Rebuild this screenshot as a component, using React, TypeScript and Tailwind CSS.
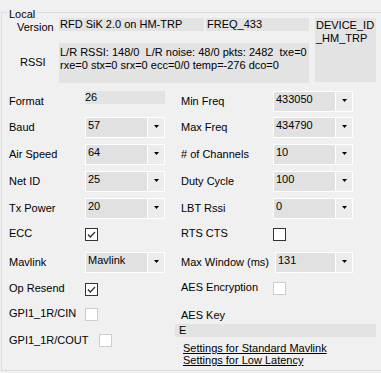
import React from "react";

function Arrow() {
  return (
    <svg width="5" height="3" viewBox="0 0 5 3" className="block">
      <polygon points="0,0 5,0 2.5,3" fill="#000" />
    </svg>
  );
}

function Combo({ value, w = 80 }: { value: string; w?: number }) {
  return (
    <div
      className="h-[21px] border border-white bg-[#e1e1e1] flex shrink-0"
      style={{ width: w }}
    >
      <div className="flex-1 pl-[2px] pt-px whitespace-nowrap">{value}</div>
      <div className="w-[17px] border-l border-white bg-[#ececec] flex items-start justify-center pt-[7px] pl-px">
        <Arrow />
      </div>
    </div>
  );
}

function Check({ checked = false, disabled = false }: { checked?: boolean; disabled?: boolean }) {
  return (
    <div
      className={
        "w-[13px] h-[13px] shrink-0 bg-white border " +
        (disabled ? "border-[#cccccc]" : "border-[#333333]")
      }
    >
      {checked && (
        <svg width="11" height="11" viewBox="0 0 11 11" className="block">
          <polyline points="2,5.5 4.3,8 9,3" fill="none" stroke="#333" strokeWidth="1.3" />
        </svg>
      )}
    </div>
  );
}

function LRow({ label, value }: { label: string; value: string }) {
  return (
    <div className="h-[27px] flex items-start">
      <div className="w-[76px] pt-[4px]">{label}</div>
      <Combo value={value} />
    </div>
  );
}

function RRow({ label, value }: { label: string; value: string }) {
  return (
    <div className="h-[27px] flex items-start">
      <div className="w-[98px] pl-[6px] pt-[4px] whitespace-nowrap">{label}</div>
      <Combo value={value} />
    </div>
  );
}

export default function App() {
  return (
    <div className="w-[381px] h-[373px] bg-[#f0f0f0] overflow-hidden text-[11px] leading-[13px] text-black font-['Liberation_Sans',Arial,sans-serif]">
      <div className="relative mt-[12px] ml-[1px] w-[390px] h-[359px] border-l border-t border-b border-[#dcdcdc]">
        <div className="absolute left-[5px] top-[-5px] px-[2px] bg-[#f0f0f0]">Local</div>

        {/* top info */}
        <div className="flex mt-[5px]">
          <div className="w-[57px] flex flex-col">
            <div className="pl-[15px] pt-[3px]">Version</div>
            <div className="pl-[18px] mt-[22px]">RSSI</div>
          </div>
          <div className="w-[250px] flex flex-col">
            <div className="flex gap-[2px]">
              <div className="w-[145px] h-[13px] bg-[#e3e3e3] pl-px whitespace-nowrap">RFD SiK 2.0 on HM-TRP</div>
              <div className="w-[103px] h-[13px] bg-[#e3e3e3] pl-px whitespace-nowrap">FREQ_433</div>
            </div>
            <div className="mt-[12px] h-[40px] bg-[#e3e3e3] pl-px pt-[3px] whitespace-pre overflow-hidden">
              {"L/R RSSI: 148/0  L/R noise: 48/0 pkts: 2482  txe=0\nrxe=0 stx=0 srx=0 ecc=0/0 temp=-276 dco=0"}
            </div>
          </div>
          <div className="ml-[6px] w-[61px] h-[64px] bg-[#e3e3e3] pt-px pl-px">
            DEVICE_ID
            <br />
            _HM_TRP
          </div>
        </div>

        {/* settings */}
        <div className="flex mt-[8px]">
          {/* left column */}
          <div className="w-[166px] ml-[7px] flex flex-col">
            <div className="h-[26px] flex items-start">
              <div className="w-[76px] pt-[4px]">Format</div>
              <div className="w-[80px] h-[13px] bg-[#e3e3e3]">26</div>
            </div>
            <LRow label="Baud" value="57" />
            <LRow label="Air Speed" value="64" />
            <LRow label="Net ID" value="25" />
            <LRow label="Tx Power" value="20" />
            <div className="h-[27px] flex items-start">
              <div className="w-[76px] pt-[2px]">ECC</div>
              <div className="mt-[3px]"><Check checked /></div>
            </div>
            <div className="h-[29px] flex items-start">
              <div className="w-[76px] pt-[4px]">Mavlink</div>
              <Combo value="Mavlink" />
            </div>
            <div className="h-[26px] flex items-start">
              <div className="w-[76px] pt-[1px]">Op Resend</div>
              <div className="mt-[2px]"><Check checked /></div>
            </div>
            <div className="h-[26px] flex items-start">
              <div className="w-[76px]">GPI1_1R/CIN</div>
              <div className="mt-[1px]"><Check disabled /></div>
            </div>
            <div className="flex items-start">
              <div className="w-[90px] pt-[1px]">GPI1_1R/COUT</div>
              <div className="mt-[1px]"><Check disabled /></div>
            </div>
          </div>

          {/* right column */}
          <div className="w-[201px] flex flex-col">
            <div className="h-[26px] flex items-start">
              <div className="w-[98px] pl-[6px] pt-[4px]">Min Freq</div>
              <Combo value="433050" />
            </div>
            <RRow label="Max Freq" value="434790" />
            <RRow label="# of Channels" value="10" />
            <RRow label="Duty Cycle" value="100" />
            <RRow label="LBT Rssi" value="0" />
            <div className="h-[27px] flex items-start">
              <div className="w-[98px] pl-[6px] pt-[2px]">RTS CTS</div>
              <div className="mt-[3px]"><Check /></div>
            </div>
            <div className="h-[29px] flex items-start">
              <div className="w-[100px] pl-[6px] pt-[4px] whitespace-nowrap">Max Window (ms)</div>
              <Combo value="131" w={78} />
            </div>
            <div className="h-[26px] flex items-start">
              <div className="w-[98px] pl-[6px]">AES Encryption</div>
              <div className="mt-[1px]"><Check disabled /></div>
            </div>
            <div className="pl-[6px] pt-[2px]">AES Key</div>
            <div className="mt-[2px] h-[13px] bg-[#e3e3e3] pl-[4px]">E</div>
            <div className="mt-[5px] pl-[8px]">
              <span className="underline">Settings for Standard Mavlink</span>
            </div>
            <div className="mt-px h-[14px] overflow-hidden pl-[8px]">
              <div className="mt-[-2px]">
                <span className="underline">Settings for Low Latency</span>
              </div>
            </div>
          </div>
        </div>
      </div>
    </div>
  );
}
